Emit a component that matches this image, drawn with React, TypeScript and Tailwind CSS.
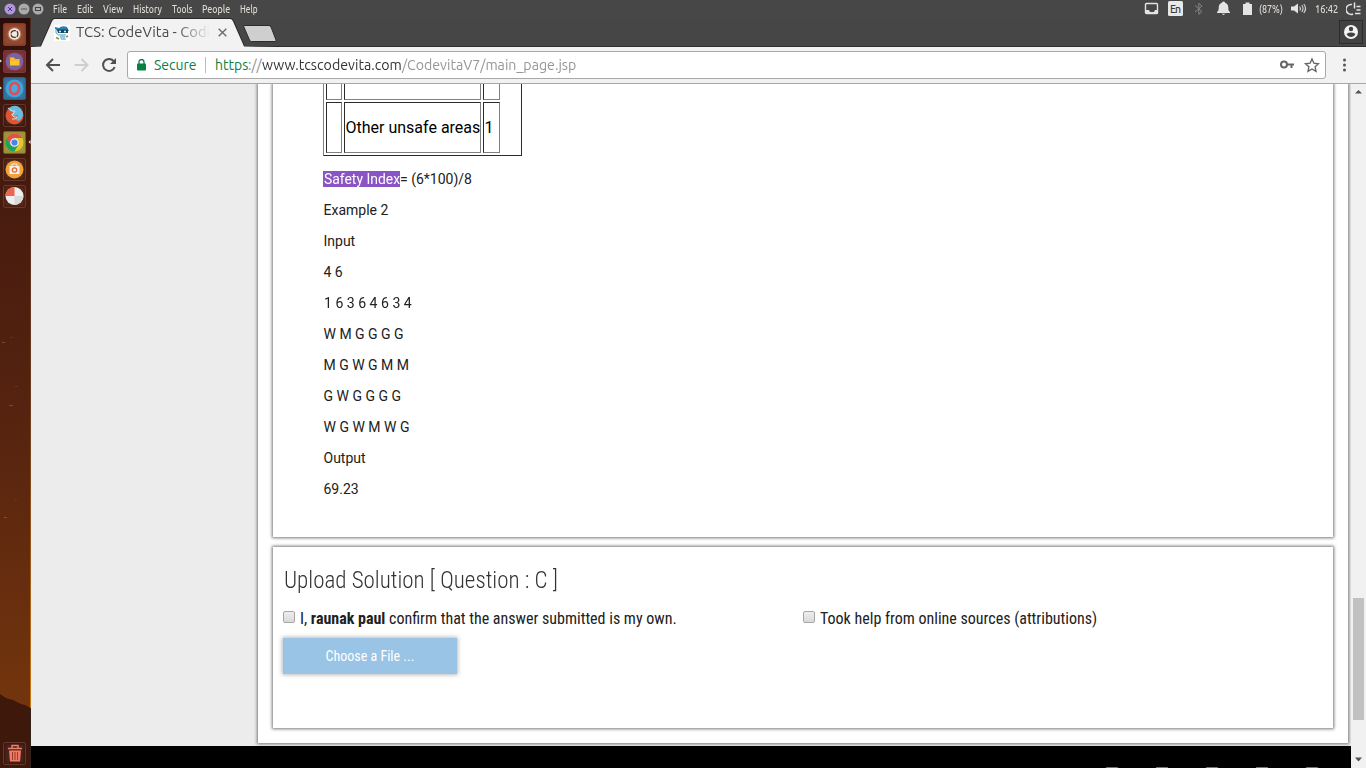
import { useLayoutEffect, useRef, useState } from "react";
import type { ReactNode } from "react";

const UI = "font-['Ubuntu','Noto_Sans',sans-serif]";
const COND = "font-['Roboto_Condensed','Roboto',sans-serif]";

/* One line of text, condensed or expanded horizontally to a given width. */
function Fit({ w, className = "", children }: { w: number; className?: string; children: ReactNode }) {
  const ref = useRef<HTMLSpanElement>(null);
  const [k, setK] = useState(1);
  useLayoutEffect(() => {
    if (ref.current && ref.current.offsetWidth) setK(w / ref.current.offsetWidth);
  }, [w]);
  return (
    <span className={`block shrink-0 whitespace-nowrap ${className}`} style={{ width: w }}>
      <span ref={ref} className="inline-block origin-left" style={{ transform: `scaleX(${k})` }}>
        {children}
      </span>
    </span>
  );
}

function MenuBar() {
  return (
    <header className={`flex h-[18px] shrink-0 items-center bg-[#474747] text-[10.5px] font-medium leading-[18px] text-[#dfdbd2] ${UI}`}>
      <svg className="h-[18px] w-[53px] shrink-0" viewBox="0 0 53 18">
        <circle cx="10" cy="9" r="5.500" fill="#b096dc" />
        <path d="M8 7l4 4M12 7l-4 4" stroke="#4c3b68" strokeWidth="1" />
        <circle cx="24" cy="9" r="5.500" fill="#aaa" />
        <path d="M21 9h6" stroke="#555" />
        <circle cx="38" cy="9" r="5.500" fill="#aaa" />
        <rect x="35.500" y="7.500" width="5" height="3" fill="none" stroke="#444" />
      </svg>
      <Fit w={14} className="mr-[10px]">File</Fit>
      <Fit w={16} className="mr-[10px]">Edit</Fit>
      <Fit w={20} className="mr-[10px]">View</Fit>
      <Fit w={29} className="mr-[10px]">History</Fit>
      <Fit w={21} className="mr-[9px]">Tools</Fit>
      <Fit w={28} className="mr-[10px]">People</Fit>
      <Fit w={18}>Help</Fit>
      <div className="flex-1" />
      <svg className="h-[18px] w-[138px] shrink-0" viewBox="1120 0 138 18">
        <rect x="1145.500" y="3.500" width="12" height="10" rx="1" fill="none" stroke="#e4e4e4" strokeWidth="1.400" />
        <path d="M1146 10h3l1 2h4l1-2h3v4h-12z" fill="#e4e4e4" />
        <rect x="1168" y="1" width="15" height="15" rx="1.500" fill="#e8e8e8" />
        <text x="1170" y="12.500" fontSize="10.500" textLength="11" fill="#3c3c3c">En</text>
        <path d="M1195 5.500l7 6-3.200 2.800v-11l3.200 2.700-7 6" fill="none" stroke="#858585" strokeWidth="1" />
        <path d="M1217 13v-1c1.500-1 1.700-2 1.700-4.500c0-2.500 1.200-4 3-4.500a1.800 1.500 0 0 1 3.600 0c1.800.5 3 2 3 4.500c0 2.500.2 3.500 1.700 4.500v1zM1221.500 13.800h4l-2 1.200z" fill="#e4e4e4" />
        <path d="M1243 4h2.500v-1.500h4V4h2.500v11h-9z" fill="#e4e4e4" />
      </svg>
      <Fit w={24} className="ml-[1px]">(87%)</Fit>
      <svg className="ml-[7px] h-[18px] w-[18px] shrink-0" viewBox="0 0 18 18">
        <path d="M1 6.500h3l4-3v10l-4-3H1z" fill="#e4e4e4" />
        <path d="M9.700 6.500q1.500 2 0 4M11.700 5q2.700 3.500 0 7M13.800 4q3.500 4.500 0 9" fill="none" stroke="#d4d4d4" strokeWidth="1.100" />
      </svg>
      <Fit w={23} className="ml-[7px]">16:42</Fit>
      <svg className="ml-[8px] mr-[4px] h-[18px] w-[16px] shrink-0" viewBox="0 0 16 18">
        <path d="M6 4.500a5 5 0 1 0 1 9.500M8.500 2.500v6M10.500 6.500h4M10.500 10h4M9 13.500h5.500" fill="none" stroke="#e4e4e4" strokeWidth="1.500" />
      </svg>
    </header>
  );
}

function Tile({ color, mb, children }: { color: string; mb?: boolean; children: ReactNode }) {
  return (
    <svg className={`ml-[3px] h-[23px] w-[23px] shrink-0 ${mb ? "" : "mb-[4px]"}`} viewBox="0 0 23 23">
      <rect x="0.500" y="0.500" width="22" height="22" rx="1.500" fill={color} stroke="#8a6255" strokeOpacity=".45" />
      <rect x="2.500" y="2.500" width="18" height="18" rx="2" fill="#fff" fillOpacity=".05" />
      {children}
    </svg>
  );
}

function Launcher() {
  return (
    <aside className="relative flex w-[31px] shrink-0 flex-col overflow-hidden bg-linear-to-b from-[#3b150e] via-[#57240f] via-55% to-[#7a390b]">
      <svg className="absolute inset-0 h-[750px] w-[31px]" viewBox="0 18 31 750">
        <defs>
          <linearGradient id="top" x1="0" y1="0" x2="0" y2="1">
            <stop offset="0" stopColor="#2a0c09" /><stop offset="1" stopColor="#2a0c09" stopOpacity="0" />
          </linearGradient>
          <linearGradient id="edge" x1="0" y1="0" x2="0" y2="1">
            <stop offset="0" stopColor="#4a2a20" /><stop offset=".55" stopColor="#6a3b20" /><stop offset="1" stopColor="#c87818" />
          </linearGradient>
        </defs>
        <rect x="0" y="18" width="31" height="60" fill="url(#top)" />
        <path d="M0 694l6 4 7 2 8 4 4 1 6 3v60H0z" fill="#3f180c" />
        <rect x="30" y="18" width="1" height="690" fill="url(#edge)" />
        <rect x="30" y="708" width="1" height="60" fill="#33231c" />
        <g fill="#8e5367" fillOpacity=".65">
          <rect x="2" y="342" width="3" height="1" /><rect x="9" y="405" width="4" height="1" />
          <rect x="4" y="517" width="3" height="1" fill="#a1633f" /><rect x="10" y="337" width="3" height="1" opacity=".5" />
          <rect x="15" y="386" width="3" height="1" opacity=".5" /><rect x="14" y="500" width="3" height="1" opacity=".4" />
        </g>
        <g fill="#ddd">
          <path d="M0 59.500l2 1.500-2 1.500zM0 86.500l2 1.500-2 1.500zM0 140.500l2 1.500-2 1.500zM30.500 140l-2 2 2 2z" />
        </g>
      </svg>
      <div className="relative flex flex-1 flex-col pt-[5px]">
        <Tile color="#8d4026">
          <circle cx="11.500" cy="11" r="7" fill="#c48b72" fillOpacity=".6" />
          <circle cx="11.500" cy="11" r="5.800" fill="#f2e8e3" />
          <circle cx="11.500" cy="11" r="3.400" fill="none" stroke="#58301f" strokeWidth="1.300" />
          <path d="M7 11h2.500M12.500 9.300l1.700-2.800M12.500 12.700l1.700 2.800" stroke="#f2e8e3" strokeWidth="1" fill="none" />
        </Tile>
        <Tile color="#7b2b35">
          <circle cx="11.500" cy="11.500" r="8.800" fill="#79649c" />
          <path d="M7 7.500h4l1 1.500h4.500v6.500H7z" fill="#ffc22e" /><path d="M7 10h9.500" stroke="#f0a923" />
        </Tile>
        <Tile color="#326e9d">
          <circle cx="11.500" cy="11.500" r="9" fill="#39a8da" />
          <ellipse cx="11.500" cy="11.500" rx="4.500" ry="5.500" fill="#4baadd" stroke="#e34b55" strokeWidth="2.600" />
        </Tile>
        <Tile color="#40180f">
          <circle cx="11.500" cy="11.500" r="9" fill="#d95732" />
          <path d="M6 4q5-4 10-1 4 3 4 8-1 5-5 6l-3-2q4-2 2-4l-3 1q-3 0-3-2l3-2-4-1z" fill="#66bddf" />
          <path d="M5 4l4 3 3 0-2 3q-2 1 1 3 2 0 3 0-1 3-5 2" fill="none" stroke="#d7dfdf" strokeWidth="1" />
        </Tile>
        <Tile color="#9b9032">
          <circle cx="11.500" cy="11.500" r="9" fill="#e5c52d" />
          <path d="M3.700 7A9 9 0 0 1 19.300 7H11.500l-3.900 6.700z" fill="#dd5347" />
          <path d="M3.700 7A9 9 0 0 0 11.500 20.500l3.900-6.800H7.600z" fill="#21a15f" />
          <circle cx="11.500" cy="11.500" r="4.300" fill="#f3f3f3" /><circle cx="11.500" cy="11.500" r="3.100" fill="#4b83e9" />
        </Tile>
        <Tile color="#4c1e10">
          <circle cx="11.500" cy="11.500" r="9" fill="#eea33d" />
          <path d="M6.500 8h10v8h-10z" fill="#f8eee4" /><path d="M9 8V6h5v2" fill="none" stroke="#f8eee4" />
          <circle cx="11.500" cy="12" r="2.200" fill="none" stroke="#e46833" strokeWidth="1.200" />
        </Tile>
        <Tile color="#4c1e10">
          <circle cx="11.500" cy="11" r="9" fill="#efefef" />
          <path d="M11.500 11V2a9 9 0 0 0-9 9z" fill="#ed654f" /><path d="M11.500 11h9a9 9 0 0 1-9 9z" fill="#d9d9d9" />
        </Tile>
        <div className="flex-1" />
        <div className="flex pb-[3px]">
          <Tile color="#3e190f" mb>
            <path d="M5 6.500h14M9 6V3.500h6V6" fill="none" stroke="#f27c68" strokeWidth="1.500" />
            <path d="M6 8.500h12l-1 11H7z" fill="#f27c68" />
            <path d="M9.500 10v8M12 10v8M14.500 10v8" stroke="#9c3e2d" strokeWidth="1.100" />
          </Tile>
        </div>
      </div>
    </aside>
  );
}

function TabStrip() {
  return (
    <div className={`flex h-[29px] shrink-0 bg-[#464646] ${UI}`}>
      <div className="relative flex w-[216px] items-center pl-[23px]">
        <svg className="absolute inset-0 h-[29px] w-[248px]" viewBox="31 18 248 29">
          <path d="M31 46.500H40.500L51.500 21Q52.500 18.500 54 18.500H231Q232.500 18.500 233.500 21L244.500 46.500H279" fill="none" stroke="#282828" />
          <path d="M31 47L41 46.500L52 21.500Q53 19 54.500 19H230.500Q232 19 233 21.500L244 46.500L279 47z" fill="#f2f2f2" />
          <path d="M243.500 26Q243 25.500 244 25.500H269Q270 25.500 271 27L276 40Q276.500 41.500 275 41.500H251.500Q250 41.500 249.500 40z" fill="#cfcfcf" stroke="#2c2c2c" />
        </svg>
        <svg className="relative h-4 w-4 shrink-0" viewBox="0 0 16 16">
          <rect width="16" height="16" fill="#fff" />
          <path d="M1 2l4 1q3-3 8-1l2 4H4L1 4z" fill="#2082b8" />
          <path d="M3 4.500h11v3.500H4z" fill="#194558" /><circle cx="6" cy="6.500" r="1.100" fill="#cfe6ee" /><circle cx="11" cy="6.500" r="1.100" fill="#cfe6ee" />
          <path d="M5 9h7l-1 3 1 3H7l-1-3z" fill="#8ccbe3" /><path d="M2 12.500l3 1.500M12 12l2-1" stroke="#a28c42" strokeWidth="1.800" /><path d="M2 5v3l3 2.500" stroke="#4ba7bc" fill="none" />
        </svg>
        <div className="relative ml-[6px] w-[134px] text-[14px] text-[#4a4a4a] mask-r-from-75% mask-r-to-100%">
          <Fit w={134}>TCS: CodeVita - Codi</Fit>
        </div>
        <svg className="relative ml-[8px] h-[9px] w-[9px] shrink-0" viewBox="0 0 9 9">
          <path d="M0.700 0.700l7.600 7.600M8.300 0.700L0.700 8.300" stroke="#6c6c6c" strokeWidth="1.400" />
        </svg>
      </div>
      <div className="flex flex-1 items-start justify-end border-b border-[#303030] pr-[3px]">
        <svg className="mt-[2px] h-[24px] w-[24px]" viewBox="0 0 24 24">
          <rect x="0.500" y="0.500" width="23" height="23" fill="#424242" stroke="#2c2c2c" />
          <circle cx="12" cy="12" r="7" fill="#f4f4f4" /><circle cx="12" cy="9" r="2.200" fill="#424242" />
          <path d="M7.500 14q4.500-2.800 9 0-1.500 3-4.500 3t-4.500-3z" fill="#424242" />
        </svg>
      </div>
    </div>
  );
}

function Toolbar() {
  return (
    <div className={`flex h-[37px] shrink-0 items-center border-b border-[#a7a7a7] bg-[#f2f2f2] ${UI}`}>
      <svg className="h-[36px] w-[96px] shrink-0" viewBox="31 47 96 36">
        <path d="M60 65H47.500M53 59l-6 6 6 6" fill="none" stroke="#505050" strokeWidth="2" />
        <path d="M74.500 65H87M81.500 59l6 6-6 6" fill="none" stroke="#cfcfcf" strokeWidth="2" />
        <path d="M114 61.500A6 6 0 1 0 114.700 67" fill="none" stroke="#505050" strokeWidth="2" />
        <path d="M116 58v6h-6z" fill="#505050" />
      </svg>
      <div className="flex h-[28px] w-[1199px] items-center rounded-[3px] border border-[#a9a9a9] bg-white text-[14px] leading-[26px]">
        <svg className="ml-[9px] h-[12px] w-[9px] shrink-0" viewBox="0 0 9 12">
          <rect y="4.500" width="9" height="7" rx="0.800" fill="#0b8043" /><path d="M2 5V3a2.500 2.500 0 0 1 5 0v2" fill="none" stroke="#0b8043" strokeWidth="1.300" />
        </svg>
        <Fit w={43} className="ml-[8px] text-[#0b8043]">Secure</Fit>
        <span className="ml-[8px] h-[16px] w-px bg-[#bdbdbd]" />
        <Fit w={33} className="ml-[9px] text-[#0b8043]">https</Fit>
        <Fit w={14} className="text-[#8f8f8f]">://</Fit>
        <Fit w={140} className="text-[#333]">www.tcscodevita.com</Fit>
        <Fit w={174} className="text-[#969696]">/CodevitaV7/main_page.jsp</Fit>
        <div className="flex-1" />
        <svg className="mr-[5px] h-[20px] w-[42px] shrink-0" viewBox="1278 55 42 20">
          <circle cx="1284" cy="64.500" r="3" fill="none" stroke="#666" strokeWidth="2" />
          <path d="M1287 64.500h7M1291.500 65v3" stroke="#666" strokeWidth="2" />
          <path d="M1312 59l1.900 4.200 4.600.5-3.400 3.100.9 4.500-4-2.300-4 2.300.9-4.500-3.400-3.100 4.600-.5z" fill="none" stroke="#666" strokeWidth="1.400" />
        </svg>
      </div>
      <svg className="ml-[14px] h-[14px] w-[9px]" viewBox="0 0 9 14">
        <circle cx="4.500" cy="2" r="1.500" fill="#555" /><circle cx="4.500" cy="7" r="1.500" fill="#555" /><circle cx="4.500" cy="12" r="1.500" fill="#555" />
      </svg>
    </div>
  );
}

const cell = "border border-t-[#2b2b2b] border-l-[#2b2b2b] border-r-[#808080] border-b-[#808080]";

function ScoreTable() {
  return (
    <div className="flex h-[72px] w-[199px] flex-col gap-[2px] border-r border-b border-l border-r-[#2b2b2b] border-b-[#2b2b2b] border-l-[#808080] pb-[2px] pl-[2px] text-[16px] text-black">
      <div className="flex h-[16px] gap-[2px]">
        <div className={`-mt-px w-[16px] ${cell}`} />
        <div className={`-mt-px w-[137px] ${cell}`} />
        <div className={`-mt-px w-[17px] ${cell}`} />
      </div>
      <div className="flex h-[51px] gap-[2px] leading-[50px]">
        <div className={`w-[16px] ${cell}`} />
        <div className={`w-[137px] pl-[0.5px] ${cell}`}><Fit w={135}>Other unsafe areas</Fit></div>
        <div className={`w-[17px] pl-[0.5px] ${cell}`}>1</div>
      </div>
    </div>
  );
}

const lines: [string, number][] = [
  ["Example 2", 65], ["Input", 32], ["4 6", 19], ["1 6 3 6 4 6 3 4", 87.500], ["W M G G G G", 80],
  ["M G W G M M", 86], ["G W G G G G", 77], ["W G W M W G", 86], ["Output", 42], ["69.23", 35],
];

function Check() {
  return <span className="mt-[4px] h-[12px] w-[12px] shrink-0 rounded-[2px] border border-[#a8a8a8] bg-linear-to-b from-[#eeeeee] to-[#d9d9d9]" />;
}

function Content() {
  return (
    <main className="flex min-w-0 flex-1 flex-col bg-[#ececec]">
      <section className="ml-[227px] mr-[3px] flex h-[659px] shrink-0 flex-col bg-white px-[15px] shadow-[0_0_3px_1px_#777]">
        <article className="h-[453px] shrink-0 bg-white pl-[50px] shadow-[0_0_3px_1px_#777] [clip-path:inset(0_-4px_-4px_-4px)]">
          <ScoreTable />
          <div className="mt-[13px] flex flex-col gap-[11px] text-[14px] leading-[20px] text-[#212121]">
            <p className="flex items-center">
              <span className="h-[16px] w-[77px] bg-[#8a54c5] pl-[0.5px] leading-[16px] text-white"><Fit w={76.5}>Safety Index</Fit></span>
              <Fit w={72}>= (6*100)/8</Fit>
            </p>
            {lines.map(([t, w]) => <p key={t} className="pl-[0.5px]"><Fit w={w}>{t}</Fit></p>)}
          </div>
        </article>
        <article className={`mt-[10px] h-[181px] shrink-0 bg-white pl-[10px] text-[16px] text-[#212121] shadow-[0_0_3px_1px_#777] ${COND}`}>
          <h2 className="pl-[0.5px] pt-[17px] text-[24px] font-light leading-[32px] text-[#333]"><Fit w={274}>Upload Solution [ Question : C ]</Fit></h2>
          <div className="mt-[11px] flex h-[24px] leading-[24px]">
            <div className="flex w-[520px]"><Check /><Fit w={377} className="ml-[5px]">I, <b>raunak paul</b> confirm that the answer submitted is my own.</Fit></div>
            <Check /><Fit w={277} className="ml-[5px]">Took help from online sources (attributions)</Fit>
          </div>
          <button className="mt-[7px] flex h-[36px] w-[174px] items-center justify-center bg-[#99c4e5] text-[14px] text-white shadow-[0_0_4px_1px_#bbb]">
            <Fit w={89}>Choose a File ...</Fit>
          </button>
        </article>
      </section>
      <footer className="mt-[3px] flex flex-1 items-end justify-end gap-[38px] bg-black pr-[33px]">
        {[0, 1, 2, 3, 4].map((i) => <span key={i} className="h-px w-[12px] rounded-full bg-[#777]" />)}
      </footer>
    </main>
  );
}

function Scrollbar() {
  return (
    <div className="flex w-[15px] shrink-0 flex-col items-center bg-[#f1f1f1]">
      <svg className="mt-[5px] h-[5px] w-[7px]" viewBox="0 0 7 5"><path d="M0 4.500L3.500 1 7 4.500z" fill="#505050" /></svg>
      <div className="mt-[504px] h-[122px] w-[11px] bg-[#c1c1c1]" />
      <svg className="mt-[37px] h-[5px] w-[7px]" viewBox="0 0 7 5"><path d="M0 .5h7L3.500 4.500z" fill="#505050" /></svg>
    </div>
  );
}

export default function App() {
  return (
    <div className="flex h-[768px] w-[1366px] flex-col overflow-hidden font-['Roboto',sans-serif]">
      <MenuBar />
      <div className="flex min-h-0 flex-1">
        <Launcher />
        <div className="flex min-w-0 flex-1 flex-col">
          <TabStrip />
          <Toolbar />
          <div className="flex min-h-0 flex-1 overflow-hidden">
            <Content />
            <Scrollbar />
          </div>
        </div>
      </div>
    </div>
  );
}
